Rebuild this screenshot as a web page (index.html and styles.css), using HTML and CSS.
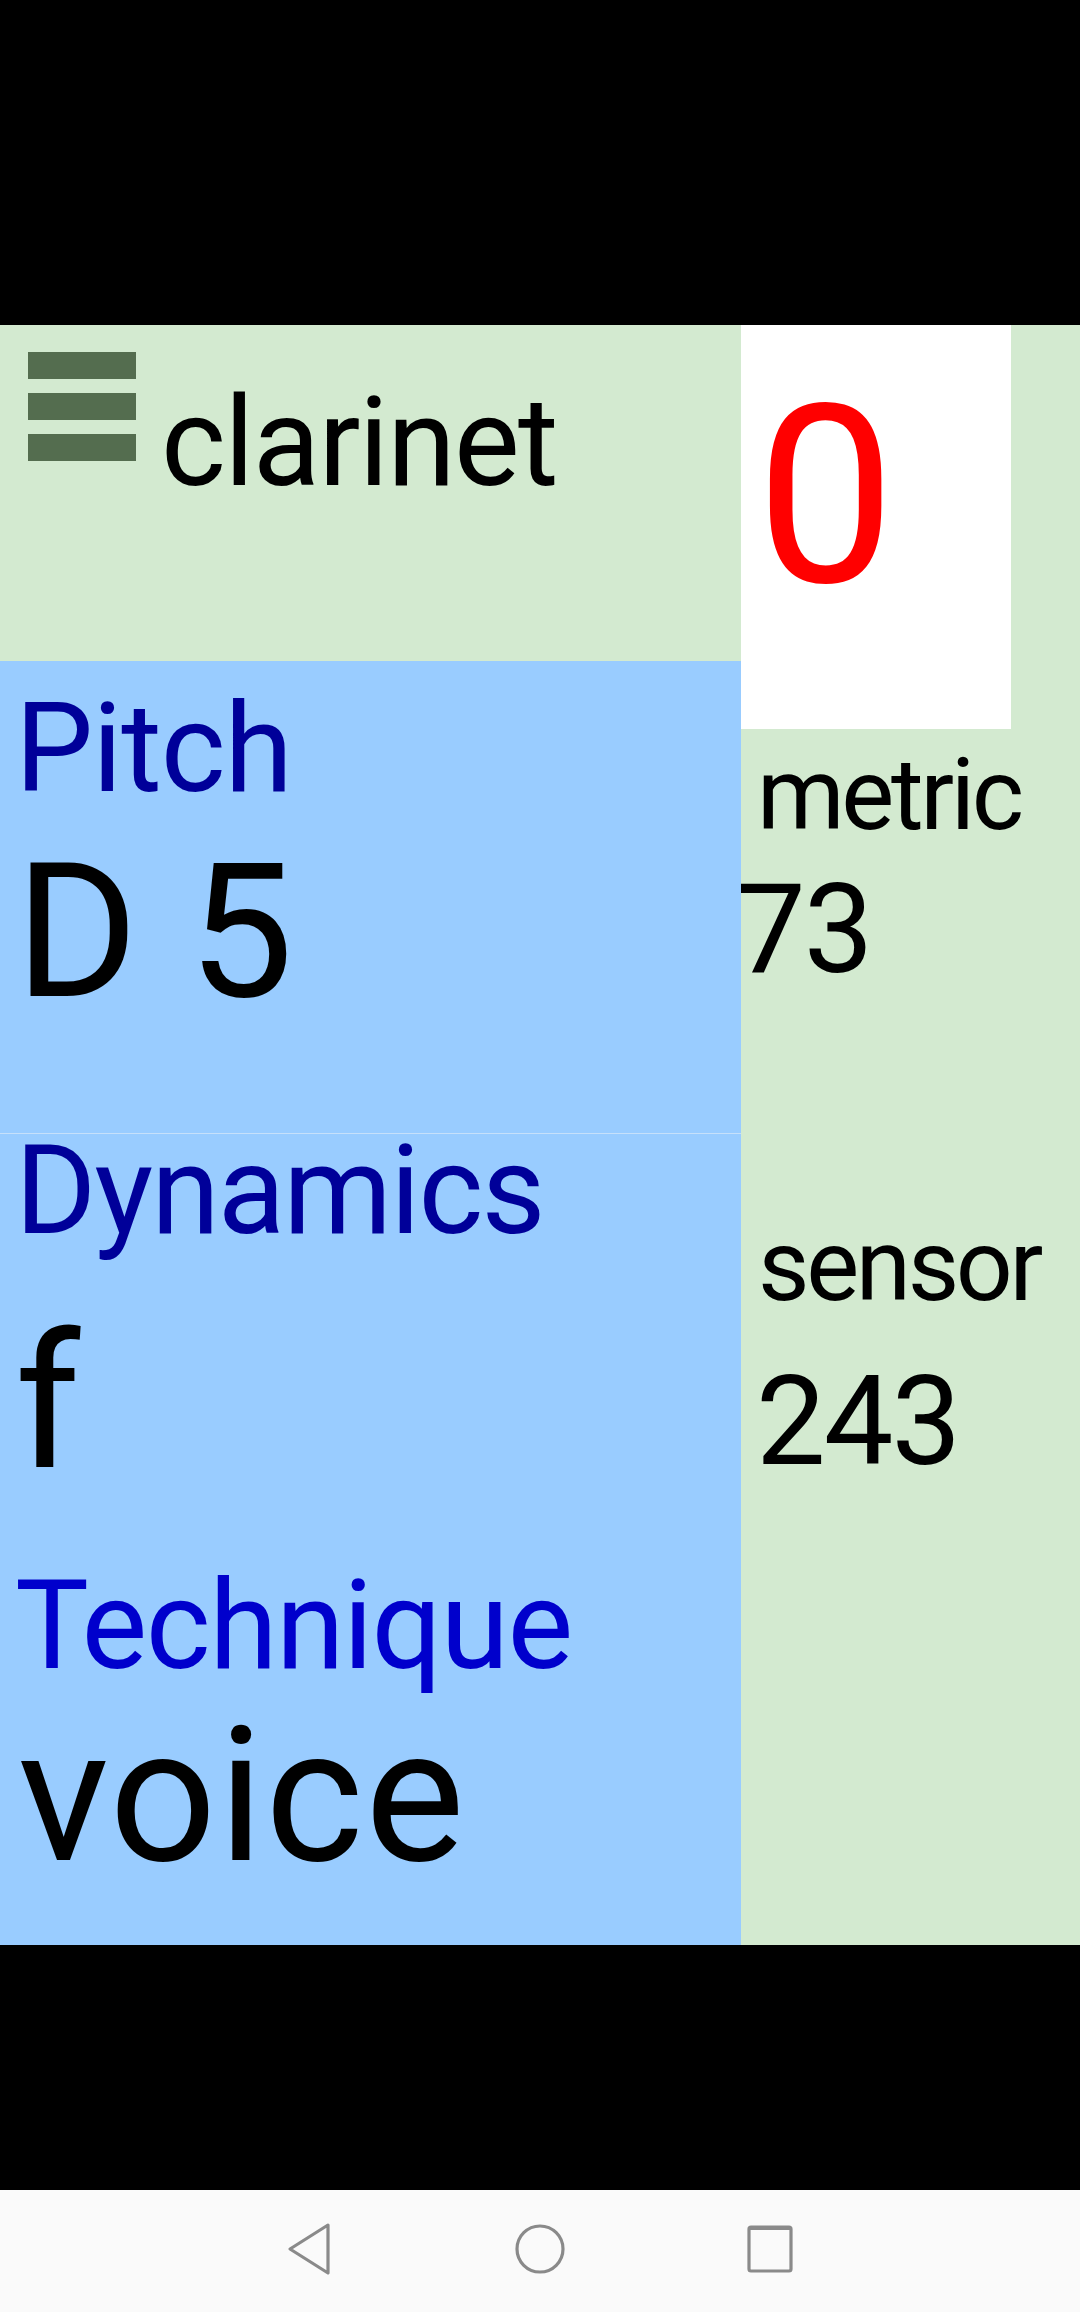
FILE: index.html
```html
<!DOCTYPE html>
<html>
<head>
<meta charset="utf-8">
<link rel="stylesheet" href="styles.css">
</head>
<body>
<div class="screen">
  <div class="statusbar"></div>
  <div class="app">
    <div class="left">
      <header class="head">
        <div class="menu"><span></span><span></span><span></span></div>
        <div class="title">clarinet</div>
      </header>
      <section class="panel p1">
        <div class="label dark pitch-label">Pitch</div>
        <div class="value pitch-value">D 5</div>
      </section>
      <section class="panel p2">
        <div class="label dark dyn-label">Dynamics</div>
        <div class="value dyn-value">f</div>
        <div class="label bright tech-label">Technique</div>
        <div class="value tech-value">voice</div>
      </section>
    </div>
    <div class="right">
      <div class="score"><span class="score-num">0</span></div>
      <div class="small metric">metric</div>
      <div class="num metric-num">73</div>
      <div class="small sensor">sensor</div>
      <div class="num sensor-num">243</div>
    </div>
  </div>
  <div class="bottombar"></div>
  <nav class="navbar">
    <svg class="nav-icon" width="48" height="54" viewBox="0 0 48 54">
      <path d="M43 3 L5 27 L43 51 Z" fill="none" stroke="#8a8a8a" stroke-width="3.2" stroke-linejoin="round"/>
    </svg>
    <svg class="nav-icon" width="54" height="54" viewBox="0 0 54 54">
      <circle cx="27" cy="27" r="23" fill="none" stroke="#8a8a8a" stroke-width="3.2"/>
    </svg>
    <svg class="nav-icon" width="48" height="54" viewBox="0 0 48 54">
      <rect x="3" y="5" width="42" height="44" rx="2" fill="none" stroke="#8a8a8a" stroke-width="3.2"/>
      <rect x="3" y="4" width="42" height="4" fill="#8a8a8a"/>
    </svg>
  </nav>
</div>
</body>
</html>
```

FILE: styles.css
```css
* { box-sizing: border-box; }
html, body {
  margin: 0;
  padding: 0;
  background: #000;
}
body {
  font-family: Roboto, "Liberation Sans", sans-serif;
  width: 1080px;
  height: 2312px;
  overflow: hidden;
}
.screen {
  width: 1080px;
  height: 2312px;
  display: flex;
  flex-direction: column;
}
.statusbar {
  height: 325px;
  background: #000;
  flex: none;
}
.app {
  height: 1620px;
  flex: none;
  display: grid;
  grid-template-columns: 741px 339px;
}
.left {
  display: flex;
  flex-direction: column;
  background: #99ccff;
}
.head {
  height: 336px;
  background: #d3ead0;
  display: flex;
  align-items: flex-start;
  padding-left: 28px;
}
.menu {
  margin-top: 27px;
  width: 108px;
  display: flex;
  flex-direction: column;
  gap: 14px;
}
.menu span {
  display: block;
  height: 27px;
  background: #546d4f;
}
.title {
  margin-top: 56px;
  margin-left: 25px;
  font-size: 124px;
  line-height: 124px;
  letter-spacing: -1.7px;
  color: #000;
}
.panel {
  background: #99ccff;
  padding-left: 15px;
}
.p1 {
  height: 473px;
  padding-top: 32px;
  border-bottom: 1px solid #c6e0fa;
}
.p2 {
  flex: 1;
  padding-top: 1px;
}
.label {
  font-size: 124px;
  line-height: 112px;
  white-space: nowrap;
}
.dark { color: #000099; }
.bright { color: #0000cc; }
.pitch-label { letter-spacing: -1.1px; }
.dyn-label { letter-spacing: -1.9px; }
.tech-label { letter-spacing: -1.5px; }
.value {
  font-size: 188px;
  line-height: 188px;
  color: #000;
  white-space: nowrap;
  letter-spacing: 1.5px;
}
.pitch-value { margin-top: 33px; }
.dyn-value { margin-top: 62px; }
.tech-label { margin-top: 73px; }
.tech-value { margin-top: 20px; padding-left: 3px; }

.right {
  background: #d3ead0;
  overflow: hidden;
  display: flex;
  flex-direction: column;
  align-items: flex-start;
}
.score {
  width: 270px;
  height: 404px;
  background: #fff;
  padding-top: 49px;
  padding-left: 15px;
  flex: none;
}
.score-num {
  display: block;
  font-size: 248px;
  line-height: 248px;
  color: #ff0000;
}
.small {
  font-size: 100px;
  line-height: 100px;
  letter-spacing: -3.4px;
  color: #000;
}
.num {
  font-size: 124px;
  line-height: 124px;
  letter-spacing: -2px;
  color: #000;
}
.metric { margin-top: 16px; padding-left: 16px; }
.metric-num { margin-top: 23px; margin-left: -5px; }
.sensor { margin-top: 224px; padding-left: 17px; }
.sensor-num { margin-top: 44px; padding-left: 15px; }

.bottombar {
  height: 245px;
  background: #000;
  flex: none;
}
.navbar {
  height: 122px;
  flex: none;
  background: #fafafa;
  position: relative;
}
.nav-icon {
  position: absolute;
  top: 32px;
}
.nav-icon:nth-child(1) { left: 285px; }
.nav-icon:nth-child(2) { left: 513px; }
.nav-icon:nth-child(3) { left: 746px; }
```
